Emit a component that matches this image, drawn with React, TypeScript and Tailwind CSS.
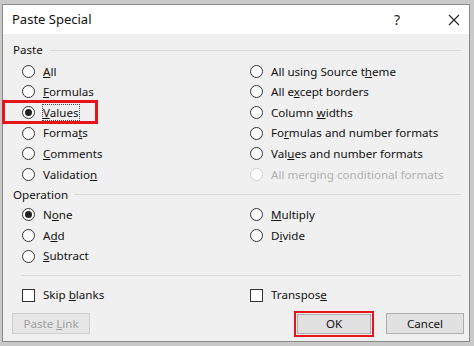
import React from 'react';

const font = { fontFamily: '"Noto Sans", "Liberation Sans", sans-serif' };

function Radio({ checked = false, disabled = false }: { checked?: boolean; disabled?: boolean }) {
  return (
    <span
      className={`flex h-[13px] w-[13px] shrink-0 items-center justify-center rounded-full border bg-white ${
        disabled ? 'border-[#cfcfcf]' : 'border-[#333]'
      }`}
    >
      {checked && <span className="h-[7px] w-[7px] rounded-full bg-[#222]" />}
    </span>
  );
}

function RadioRow({
  label,
  checked,
  disabled,
  boxed,
}: {
  label: React.ReactNode;
  checked?: boolean;
  disabled?: boolean;
  boxed?: boolean;
}) {
  return (
    <div className={`flex h-[20.6px] items-center gap-[8px] ${disabled ? 'text-[#b0b0b0]' : 'text-[#111]'}`}>
      <Radio checked={checked} disabled={disabled} />
      <span className={boxed ? 'outline outline-1 outline-dotted outline-[#444] leading-[15px]' : ''}>{label}</span>
    </div>
  );
}

function Checkbox({ label }: { label: React.ReactNode }) {
  return (
    <div className="flex items-center gap-[8px] text-[#111]">
      <span className="h-[13px] w-[13px] shrink-0 border border-[#333] bg-white" />
      <span>{label}</span>
    </div>
  );
}

function GroupHeader({ title }: { title: string }) {
  return (
    <div className="flex h-[16px] items-center gap-[6px] pl-[10px] pr-[8px] text-[#111]">
      <span>{title}</span>
      <span className="h-px flex-1 bg-[#dadada]" />
    </div>
  );
}

export default function App() {
  return (
    <div className="h-[346px] w-[474px] bg-[#c9c9c9] pl-[2px] pr-[4px] pt-[4px] pb-[4px]" style={font}>
      <div className="flex h-full flex-col border border-[#8a8a8a] bg-[#f0f0f0] text-[11.6px]">
        {/* Title bar */}
        <div className="flex h-[29px] items-center bg-white pl-[9px] pr-[9px]">
          <span className="flex-1 text-[13px] text-[#111]">Paste Special</span>
          <span className="mr-[48px] text-[14px] text-[#222]">?</span>
          <svg width="12" height="12" viewBox="0 0 12 12" className="text-[#222]">
            <path d="M1 1L11 11M11 1L1 11" stroke="currentColor" strokeWidth="1.1" />
          </svg>
        </div>

        <div className="flex flex-1 flex-col pt-[8px]">
          <GroupHeader title="Paste" />
          <div className="mt-[3px] grid grid-cols-[228px_1fr] pl-[19px]">
            <div className="flex flex-col">
              <RadioRow label={<><u>A</u>ll</>} />
              <RadioRow label={<><u>F</u>ormulas</>} />
              <RadioRow label={<><u>V</u>alues</>} checked boxed />
              <RadioRow label={<>Forma<u>t</u>s</>} />
              <RadioRow label={<><u>C</u>omments</>} />
              <RadioRow label={<>Validatio<u>n</u></>} />
            </div>
            <div className="flex flex-col">
              <RadioRow label={<>All using Source t<u>h</u>eme</>} />
              <RadioRow label={<>All e<u>x</u>cept borders</>} />
              <RadioRow label={<>Column <u>w</u>idths</>} />
              <RadioRow label={<>Fo<u>r</u>mulas and number formats</>} />
              <RadioRow label={<>Val<u>u</u>es and number formats</>} />
              <RadioRow label="All merging conditional formats" disabled />
            </div>
          </div>

          <div className="mt-[2px]">
            <GroupHeader title="Operation" />
          </div>
          <div className="mt-[2px] grid grid-cols-[228px_1fr] pl-[19px]">
            <div className="flex flex-col">
              <RadioRow label={<>N<u>o</u>ne</>} checked />
              <RadioRow label={<>A<u>d</u>d</>} />
              <RadioRow label={<><u>S</u>ubtract</>} />
            </div>
            <div className="flex flex-col">
              <RadioRow label={<><u>M</u>ultiply</>} />
              <RadioRow label={<>D<u>i</u>vide</>} />
            </div>
          </div>

          <div className="ml-[19px] mr-[8px] mt-[9px] h-px bg-[#dadada]" />

          <div className="mt-[10px] grid grid-cols-[228px_1fr] pl-[19px]">
            <Checkbox label={<>Skip <u>b</u>lanks</>} />
            <Checkbox label={<>Transpos<u>e</u></>} />
          </div>

          <div className="mt-[7px] flex items-center pl-[9px] pr-[5px]">
            <button className="h-[21px] w-[78px] border border-[#cfcfcf] bg-[#e6e6e6] text-[#a0a0a0]">
              Paste <u>L</u>ink
            </button>
            <div className="flex-1" />
            <div className="border-2 border-[#e8141b] p-px">
              <button className="block h-[20px] w-[74px] border border-[#adadad] bg-[#e1e1e1] text-[#111]">OK</button>
            </div>
            <button className="ml-[12px] h-[21px] w-[78px] border border-[#adadad] bg-[#e1e1e1] text-[#111]">
              Cancel
            </button>
          </div>
        </div>
      </div>
      {/* red highlight around Values */}
      <div className="pointer-events-none absolute left-[2px] top-[100px] h-[24px] w-[96px] border-[3px] border-[#e8141b]" />
    </div>
  );
}
